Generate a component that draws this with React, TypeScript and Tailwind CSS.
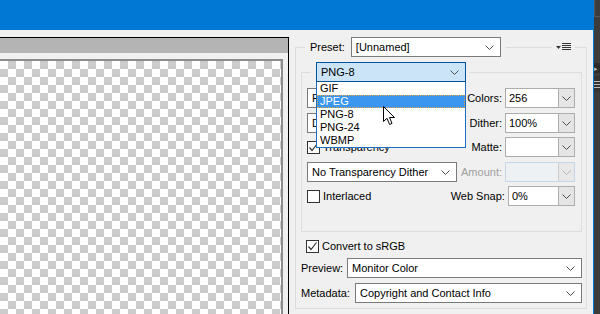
import React from "react";

// chevron used by every drop-down
const Chevron = ({ light = false }: { light?: boolean }) => (
    <svg width="9" height="5" viewBox="0 0 9 5" className="shrink-0">
        <polyline
            points="0.5,0.5 4.5,4.5 8.5,0.5"
            fill="none"
            stroke={light ? "#b4b4b4" : "#4d4d4d"}
            strokeWidth="1"
        />
    </svg>
);

const Select = ({ text, className = "" }: { text: string; className?: string }) => (
    <div
        className={
            "h-[20px] flex items-center justify-between bg-white border border-[#7a7a7a] pl-[4px] pr-[6px] " +
            className
        }
    >
        <span className="whitespace-nowrap">{text}</span>
        <Chevron />
    </div>
);

// editable combo box: white field + grey button
const Combo = ({ text, disabled = false }: { text: string; disabled?: boolean }) => (
    <div
        className={
            "w-[70px] h-[20px] flex border " +
            (disabled ? "border-[#c4d6e8]" : "border-[#adadad]")
        }
    >
        <div
            className={
                "flex-1 flex items-center pl-[3px] " +
                (disabled ? "bg-[#eef1f4]" : "bg-white")
            }
        >
            {text}
        </div>
        <div
            className={
                "w-[16px] flex items-center justify-center border-l " +
                (disabled
                    ? "border-[#cccccc] bg-[#e8e8e8]"
                    : "border-[#adadad] bg-[#e5e5e5]")
            }
        >
            <Chevron light={disabled} />
        </div>
    </div>
);

const Checkbox = ({ checked, label }: { checked: boolean; label: string }) => (
    <div className="flex items-center gap-[3px]">
        <div className="w-[13px] h-[13px] border border-[#333333] bg-white flex items-center justify-center">
            {checked && (
                <svg width="11" height="11" viewBox="0 0 11 11">
                    <polyline
                        points="1.5,5.5 4,8.5 9.5,1.5"
                        fill="none"
                        stroke="#333333"
                        strokeWidth="1.2"
                    />
                </svg>
            )}
        </div>
        <span className="whitespace-nowrap">{label}</span>
    </div>
);

const Row = ({
    left,
    label,
    combo,
    className = "",
}: {
    left: React.ReactNode;
    label: string;
    combo: React.ReactNode;
    className?: string;
}) => (
    <div className={"h-[20px] flex items-center " + className}>
        <div className="w-[150px] h-full flex items-center">{left}</div>
        <div className="flex-1 text-right pr-[3px] whitespace-nowrap">{label}</div>
        {combo}
    </div>
);

const formats = ["GIF", "JPEG", "PNG-8", "PNG-24", "WBMP"];

const App = () => {
    return (
        <div className="w-[600px] h-[314px] overflow-hidden flex bg-[#f0f0f0] text-black text-[11px] font-['Liberation_Sans',Arial,sans-serif]">
            {/* window */}
            <div className="w-[594px] h-full flex flex-col border-r border-[#0078d4]">
                <div className="h-[30px] bg-[#0078d4]" />
                <div className="flex-1 flex">
                    {/* preview area */}
                    <div className="w-[289px] pt-[7px] flex flex-col">
                        <div className="flex-1 flex flex-col border-t border-r border-black">
                            <div className="h-[15px] bg-[#b4b4b4]" />
                            <div className="flex-1 pt-[6px] pr-[5px] flex">
                                <div className="flex-1 border-t-2 border-r-2 border-[#8c8c8c] bg-[image:conic-gradient(#cccccc_25%,#ffffff_0_50%,#cccccc_0_75%,#ffffff_0)] bg-[length:16px_16px]" />
                            </div>
                        </div>
                    </div>

                    {/* settings panel */}
                    <div className="flex-1">
                        <div className="ml-[6px] w-[292px] mt-[17px] border border-[#dcdcdc] pb-[5px]">
                            <div className="-mt-[11px] h-[20px] flex items-center">
                                <div className="ml-[9px] px-[5px] bg-[#f0f0f0] flex items-center h-full">
                                    <span>Preset:</span>
                                    <Select text="[Unnamed]" className="ml-[6px] w-[150px]" />
                                </div>
                                <div className="flex-1" />
                                <div className="bg-[#f0f0f0] px-[4px] mr-[11px] h-full flex items-center">
                                    <svg width="15" height="8" viewBox="0 0 15 8">
                                        <polygon points="0,3 5,3 2.5,6" fill="#333333" />
                                        <rect x="6" y="0" width="9" height="1" fill="#333333" />
                                        <rect x="6" y="2" width="9" height="1" fill="#333333" />
                                        <rect x="6" y="4" width="9" height="1" fill="#333333" />
                                        <rect x="6" y="6" width="9" height="1" fill="#333333" />
                                    </svg>
                                </div>
                            </div>

                            {/* format group */}
                            <div className="ml-[5px] mr-[4px] mt-[15px] border border-[#dcdcdc] pl-[5px] pr-[6px] pb-[25px]">
                                <div className="-mt-[11px] -ml-[5px] flex">
                                    <div className="ml-[9px] px-[5px] pr-[3px] bg-[#f0f0f0]">
                                        <div className="relative z-10">
                                            <div className="w-[150px] h-[20px] flex items-center justify-between bg-[#cce4f7] border border-[#005499] pl-[4px] pr-[6px]">
                                                <span>PNG-8</span>
                                                <Chevron />
                                            </div>
                                            <div className="absolute top-full left-0 w-full bg-white border-x border-b border-[#1a6fc4]">
                                                {formats.map((f) => (
                                                    <div
                                                        key={f}
                                                        className={
                                                            "h-[13px] leading-[13px] pl-[3px] " +
                                                            (f === "JPEG"
                                                                ? "bg-[#3a96ef] text-white outline outline-1 outline-dotted outline-[#e8a04a] -outline-offset-1"
                                                                : "")
                                                        }
                                                    >
                                                        {f}
                                                    </div>
                                                ))}
                                                <svg
                                                    width="13"
                                                    height="20"
                                                    viewBox="0 0 13 20"
                                                    className="absolute left-[66px] top-[24px]"
                                                >
                                                    <path
                                                        d="M0.5 0.5 L0.5 15.5 L4 12.3 L6.6 18.5 L9 17.4 L6.5 11.5 L11.5 11.5 Z"
                                                        fill="#ffffff"
                                                        stroke="#000000"
                                                        strokeWidth="1"
                                                        strokeLinejoin="round"
                                                    />
                                                </svg>
                                            </div>
                                        </div>
                                    </div>
                                </div>

                                <Row
                                    className="mt-[6px]"
                                    left={<Select text="Perceptual" className="w-[150px]" />}
                                    label="Colors:"
                                    combo={<Combo text="256" />}
                                />
                                <Row
                                    className="mt-[5px]"
                                    left={<Select text="Diffusion" className="w-[150px]" />}
                                    label="Dither:"
                                    combo={<Combo text="100%" />}
                                />
                                <Row
                                    className="mt-[4px]"
                                    left={<Checkbox checked label="Transparency" />}
                                    label="Matte:"
                                    combo={<Combo text="" />}
                                />
                                <Row
                                    className="mt-[5px]"
                                    left={<Select text="No Transparency Dither" className="w-[150px]" />}
                                    label=""
                                    combo={
                                        <div className="flex items-center">
                                            <span className="text-[#a0a0a0] pr-[3px]">Amount:</span>
                                            <Combo text="" disabled />
                                        </div>
                                    }
                                />
                                <Row
                                    className="mt-[4px]"
                                    left={<Checkbox checked={false} label="Interlaced" />}
                                    label="Web Snap:"
                                    combo={<Combo text="0%" />}
                                />
                            </div>

                            <div className="mt-[7px] pl-[10px] h-[14px] flex items-center">
                                <Checkbox checked label="Convert to sRGB" />
                            </div>
                            <div className="mt-[5px] pl-[5px] pr-[4px] flex items-center">
                                <span className="w-[46px]">Preview:</span>
                                <Select text="Monitor Color" className="flex-1" />
                            </div>
                            <div className="mt-[5px] pl-[5px] pr-[4px] flex items-center">
                                <span className="w-[54px]">Metadata:</span>
                                <Select text="Copyright and Contact Info" className="flex-1" />
                            </div>
                        </div>
                    </div>
                </div>
            </div>

            {/* docked panel edge */}
            <div className="flex-1 bg-[#3c3c3c] flex flex-col">
                <div className="h-[17px] border-b border-l border-[#575757]" />
                <div className="mt-[46px] h-[10px] bg-[#2b2b2b] flex items-center">
                    <span className="text-[7px] leading-none text-[#bbbbbb]">▸</span>
                </div>
                <div className="mt-[3px] h-[16px] bg-[#333333] flex flex-col justify-center gap-[2px]">
                    <div className="h-px bg-[#bbbbbb]" />
                    <div className="h-px bg-[#bbbbbb]" />
                    <div className="h-px bg-[#bbbbbb]" />
                </div>
            </div>
        </div>
    );
};

export default App;
